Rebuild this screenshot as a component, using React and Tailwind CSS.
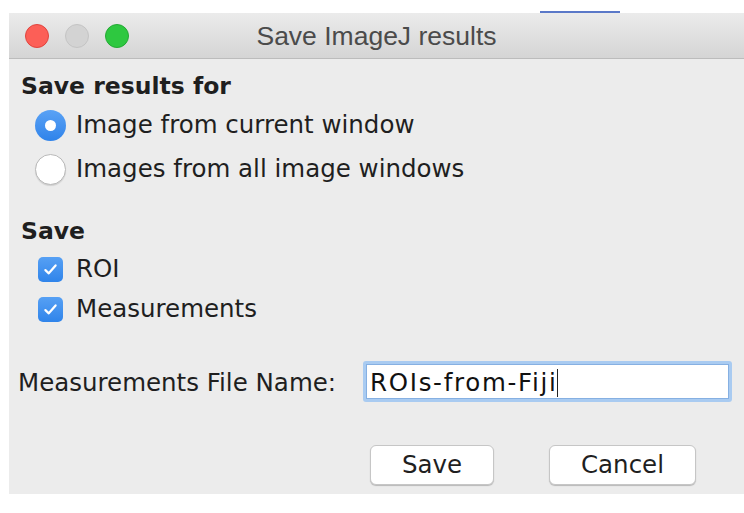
import React from "react";

function TrafficLights() {
  return (
    <div className="flex items-center gap-[16px] pl-[16px]">
      <span className="block w-[24px] h-[24px] rounded-full bg-[#fc5f57] border border-[#e0443e]" />
      <span className="block w-[24px] h-[24px] rounded-full bg-[#d3d3d3] border border-[#c4c4c4]" />
      <span className="block w-[24px] h-[24px] rounded-full bg-[#2ec840] border border-[#24a934]" />
    </div>
  );
}

function Radio({ checked, label, className = "" }) {
  return (
    <div className={"flex items-center gap-[10px] ml-[26px] h-[30px] " + className}>
      {checked ? (
        <span className="flex items-center justify-center w-[31px] h-[31px] rounded-full bg-gradient-to-b from-[#5aa2f5] to-[#2f83ea]">
          <span className="block w-[11px] h-[11px] rounded-full bg-white" />
        </span>
      ) : (
        <span className="block w-[31px] h-[31px] rounded-full bg-white border border-[#b9b9b9] shadow-[0_1px_1px_rgba(0,0,0,0.12)]" />
      )}
      <span className="leading-[30px]">{label}</span>
    </div>
  );
}

function Check({ label, className = "" }) {
  return (
    <div className={"flex items-center gap-[13px] ml-[29px] h-[30px] " + className}>
      <span className="flex items-center justify-center w-[25px] h-[25px] rounded-[5px] bg-gradient-to-b from-[#56a0f4] to-[#2f84ea]">
        <svg width="17" height="17" viewBox="0 0 16 16" fill="none">
          <path d="M3.2 8.6 L6.4 11.6 L12.8 4.2" stroke="white" strokeWidth="2.1" strokeLinecap="round" strokeLinejoin="round" />
        </svg>
      </span>
      <span className="leading-[30px]">{label}</span>
    </div>
  );
}

function Button({ children, width }) {
  return (
    <div
      className={
        "h-[40px] flex items-center justify-center bg-white border border-[#c6c6c6] rounded-[6px] shadow-[0_1px_1px_rgba(0,0,0,0.22)] leading-[30px] " +
        width
      }
    >
      {children}
    </div>
  );
}

export default function App() {
  return (
    <div className="w-[744px] h-[513px] bg-white overflow-hidden flex flex-col font-['DejaVu_Sans',sans-serif] text-[24.5px] text-[#1f1f1f]">
      {/* desktop strip behind the window */}
      <div className="h-[13px] shrink-0 flex items-end">
        <div className="ml-[540px] w-[80px] h-[2px] bg-[#5a78c8]" />
      </div>

      {/* dialog window */}
      <div className="ml-[9px] h-[481px] shrink-0 bg-[#ececec] flex flex-col">
        <div className="h-[46px] shrink-0 grid grid-cols-[1fr_auto_1fr] items-center bg-gradient-to-b from-[#ebebeb] to-[#d5d5d5] border-b border-[#bcbcbc]">
          <TrafficLights />
          <div className="font-['Liberation_Sans',sans-serif] text-[26.5px] text-[#4b4b4b] leading-[30px]">
            Save ImageJ results
          </div>
          <div />
        </div>

        <div className="flex flex-col">
          <div className="ml-[12px] mt-[12px] leading-[30px] font-bold text-[23.5px]">Save results for</div>
          <Radio checked label="Image from current window" className="mt-[9px]" />
          <Radio label="Images from all image windows" className="mt-[14px]" />

          <div className="ml-[12px] mt-[32px] leading-[30px] font-bold text-[23.5px]">Save</div>
          <Check label="ROI" className="mt-[8px]" />
          <Check label="Measurements" className="mt-[10px]" />

          <div className="flex items-center mt-[37px]">
            <div className="ml-[9px] w-[345px] leading-[30px] whitespace-nowrap mt-[2px]">Measurements File Name:</div>
            <div className="w-[369px] h-[41px] rounded-[3px] bg-[#a9cbf1] p-[3px]">
              <div className="h-full bg-white border border-[#86b0e2] flex items-center pl-[3px] pt-[3px]">
                <span className="leading-[30px] tracking-[1.7px] text-[#111]">ROIs-from-Fiji</span>
                <span className="block w-[1.5px] h-[28px] bg-[#222] ml-[-1px]" />
              </div>
            </div>
          </div>

          <div className="flex mt-[43px] ml-[361px] gap-[55px]">
            <Button width="w-[124px]">Save</Button>
            <Button width="w-[147px]">Cancel</Button>
          </div>
        </div>
      </div>
    </div>
  );
}
